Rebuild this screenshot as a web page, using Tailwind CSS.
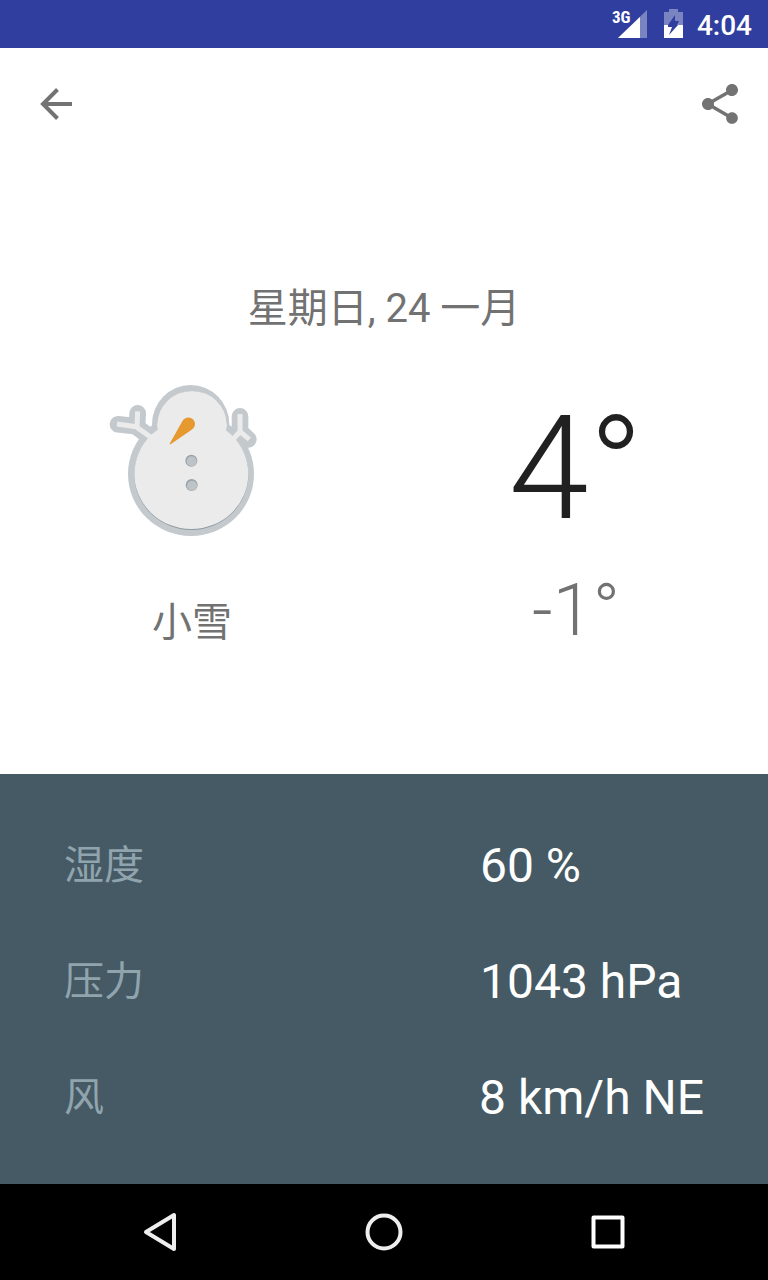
<!DOCTYPE html>
<html lang="zh-CN">
<head>
<meta charset="utf-8">
<meta name="viewport" content="width=device-width, initial-scale=1">
<title>天气详情</title>
<script src="https://cdn.jsdelivr.net/npm/@tailwindcss/browser@4"></script>
</head>
<body class="flex min-h-screen flex-col bg-white font-['Roboto','Noto_Sans_CJK_SC',sans-serif] text-[#727272]">

<!-- Status bar -->
<div class="flex h-12 items-center justify-end bg-[#303F9F] pr-4 text-white">
  <svg class="h-12 w-9" viewBox="0 0 36 48" role="img" aria-label="3G">
    <path d="M35 10V38H6z" fill="#fff" fill-opacity=".36"/>
    <path d="M28 17V38H6z" fill="#fff"/>
    <text x="0" y="23" font-size="17" font-weight="700" fill="#fff" class="font-['Roboto_Condensed','Roboto',sans-serif]">3G</text>
  </svg>
  <svg class="ml-4 h-12 w-5" viewBox="0 0 20 48" role="img" aria-label="充电中">
    <path d="M0 12H5V9H14V12H19V25H13L15 21H11V15L4 25H0z" fill="#fff" fill-opacity=".36"/>
    <path d="M0 25H4V27H8L5 35L14 25H19V38H0z" fill="#fff"/>
  </svg>
  <time class="ml-[13px] pt-1 text-[28px] leading-none font-medium">4:04</time>
</div>

<!-- Toolbar -->
<header class="flex h-28 items-center justify-between px-8">
  <button type="button" aria-label="返回" class="size-12">
    <svg class="size-12" viewBox="0 0 48 48" fill="none" stroke="#737373" stroke-width="4">
      <path d="M40 24H11M25.500 9.500L11 24L25.500 38.500"/>
    </svg>
  </button>
  <button type="button" aria-label="分享" class="-mr-2 size-12">
    <svg class="size-12" viewBox="0 0 24 24" fill="#737373">
      <path d="M18 16.080c-.76 0-1.440.3-1.960.77L8.910 12.700c.05-.23.09-.46.09-.7s-.04-.47-.09-.7l7.050-4.110c.54.5 1.250.81 2.040.81 1.660 0 3-1.340 3-3s-1.340-3-3-3-3 1.340-3 3c0 .24.04.47.09.7L8.040 9.810C7.500 9.310 6.790 9 6 9c-1.660 0-3 1.340-3 3s1.340 3 3 3c.79 0 1.500-.31 2.040-.81l7.120 4.160c-.05.21-.08.43-.08.65 0 1.610 1.310 2.920 2.920 2.920s2.920-1.310 2.920-2.920-1.310-2.920-2.920-2.920z"/>
    </svg>
  </button>
</header>

<!-- Forecast -->
<main class="flex flex-1 flex-col justify-center pt-0.5">
  <h1 class="text-center text-[40px] leading-10 font-normal">星期日, 24 一月</h1>
  <div class="mt-[46px] grid grid-cols-2">
    <div class="flex flex-col items-center">
      <svg class="-ml-3.5 size-[170px]" viewBox="0 0 510 510" role="img" aria-label="雪人">
        <!-- Grey rim -->
        <g fill="none" stroke="#c3c9cd" stroke-width="50" stroke-linecap="round" stroke-linejoin="round">
          <path d="M54 148L108 154L160 194M113 115L111 154"/>
          <path d="M420 124V170L391 200M420 170L445 193"/>
        </g>
        <g fill="#c3c9cd">
          <ellipse cx="272" cy="148" rx="116" ry="118"/>
          <ellipse cx="273" cy="297" rx="189" ry="186"/>
        </g>
        <!-- Shadow under the snow -->
        <g fill="#8f999f">
          <ellipse cx="276" cy="151" rx="105" ry="102"/>
          <ellipse cx="274" cy="299" rx="171" ry="166"/>
        </g>
        <!-- Snow -->
        <g fill="#ebebeb">
          <ellipse cx="276" cy="150" rx="105" ry="102"/>
          <ellipse cx="274" cy="297" rx="171" ry="165"/>
        </g>
        <g fill="none" stroke="#ebebeb" stroke-width="15">
          <path d="M51 147L108 155L165 196M113 109L111 156"/>
          <path d="M420 117V170L389 203M420 170L448 193"/>
        </g>
        <path d="M209 206L246 140C254 126 270 124 280 134C289 144 285 157 275 164L214 206Q209 210 209 206z" fill="#e5992f"/>
        <circle cx="274" cy="257" r="18" fill="#99a2a7"/><circle cx="275" cy="259" r="15" fill="#bdc3c7"/>
        <circle cx="275" cy="330" r="18" fill="#99a2a7"/><circle cx="276" cy="332" r="15" fill="#bdc3c7"/>
      </svg>
      <p class="mt-[54px] text-[40px] leading-12">小雪</p>
    </div>
    <div class="flex flex-col items-center pt-[22px] font-light">
      <p class="text-[144px] leading-none text-[#212121]">4°</p>
      <p class="mt-[34px] text-[72px] leading-none">-1°</p>
    </div>
  </div>
</main>

<!-- Details -->
<dl class="bg-[#455A64] px-16 pt-[34px] pb-7 text-white">
  <div class="flex h-[116px] items-center">
    <dt class="w-[65%] text-[40px] text-[#90A4AE]">湿度</dt>
    <dd class="flex-1 text-5xl whitespace-nowrap">60 %</dd>
  </div>
  <div class="flex h-[116px] items-center">
    <dt class="w-[65%] text-[40px] text-[#90A4AE]">压力</dt>
    <dd class="flex-1 text-5xl whitespace-nowrap">1043 hPa</dd>
  </div>
  <div class="flex h-[116px] items-center">
    <dt class="w-[65%] text-[40px] text-[#90A4AE]">风</dt>
    <dd class="flex-1 text-5xl whitespace-nowrap">8 km/h NE</dd>
  </div>
</dl>

<!-- Navigation bar -->
<nav class="flex h-24 items-center justify-center gap-44 bg-black">
  <button type="button" aria-label="后退" class="size-12">
    <svg class="size-12" viewBox="0 0 48 48" fill="none" stroke="#eee" stroke-width="4" stroke-linejoin="round"><path d="M38 7V41L10 24z"/></svg>
  </button>
  <button type="button" aria-label="主屏幕" class="size-12">
    <svg class="size-12" viewBox="0 0 48 48" fill="none" stroke="#eee" stroke-width="4"><circle cx="24" cy="24" r="16.500"/></svg>
  </button>
  <button type="button" aria-label="最近任务" class="size-12">
    <svg class="size-12" viewBox="0 0 48 48" fill="none" stroke="#fff" stroke-width="4" stroke-linejoin="round"><path d="M9.500 9.500H38.500V38.500H9.500z"/></svg>
  </button>
</nav>
</body>
</html>
